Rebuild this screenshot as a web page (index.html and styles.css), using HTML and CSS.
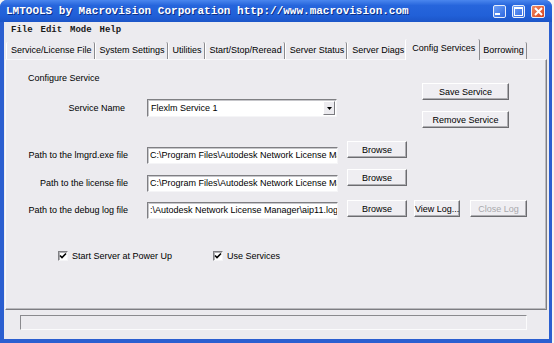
FILE: index.html
```html
<!DOCTYPE html>
<html lang="en">
<head>
    <meta charset="UTF-8">
    <title>LMTOOLS</title>
    <link rel="stylesheet" href="styles.css">
</head>
<body>
    <div class="window">
        <div class="titlebar">
            <span class="title">LMTOOLS by Macrovision Corporation http://www.macrovision.com</span>
            <div class="title-buttons">
                <span class="tbtn tbtn-min"></span>
                <span class="tbtn tbtn-max"></span>
                <span class="tbtn tbtn-close">
                    <svg width="9" height="9" viewBox="0 0 9 9"><path d="M1 1L8 8M8 1L1 8" stroke="#fff" stroke-width="2"/></svg>
                </span>
            </div>
        </div>

        <div class="client">
            <!-- menu -->
            <div class="menubar">
                <span>File</span>
                <span>Edit</span>
                <span>Mode</span>
                <span>Help</span>
            </div>

            <!-- tabs -->
            <div class="tabs">
                <span class="tab">Service/License File</span>
                <span class="tab">System Settings</span>
                <span class="tab">Utilities</span>
                <span class="tab">Start/Stop/Reread</span>
                <span class="tab">Server Status</span>
                <span class="tab">Server Diags</span>
                <span class="tab active">Config Services</span>
                <span class="tab">Borrowing</span>
            </div>

            <div class="panel">
                <div class="service-top">
                    <div class="service-left">
                        <div class="group-title">Configure Service</div>
                        <div class="service-row">
                            <span class="field-label service-label">Service Name</span>
                            <div class="select">
                                <span class="select-text">Flexlm Service 1</span>
                                <span class="select-arrow">
                                    <svg width="5" height="3" viewBox="0 0 5 3"><path d="M0 0H5L2.5 3Z" fill="#000"/></svg>
                                </span>
                            </div>
                        </div>
                    </div>
                    <div class="service-buttons">
                        <button class="btn btn-wide">Save Service</button>
                        <button class="btn btn-wide">Remove Service</button>
                    </div>
                </div>

                <div class="path-row">
                    <span class="field-label">Path to the lmgrd.exe file</span>
                    <div class="field">C:\Program Files\Autodesk Network License Ma</div>
                    <button class="btn btn-browse">Browse</button>
                </div>

                <div class="path-row second">
                    <span class="field-label">Path to the license file</span>
                    <div class="field">C:\Program Files\Autodesk Network License Ma</div>
                    <button class="btn btn-browse">Browse</button>
                </div>

                <div class="path-row log-row">
                    <span class="field-label">Path to the debug log file</span>
                    <div class="field">:\Autodesk Network License Manager\aip11.log</div>
                    <button class="btn btn-browse">Browse</button>
                    <button class="btn btn-view">View Log...</button>
                    <button class="btn btn-close" disabled>Close Log</button>
                </div>

                <div class="checks">
                    <label class="check-item">
                        <span class="checkbox">
                            <svg width="8" height="8" viewBox="0 0 8 8"><path d="M1 3.5L3 5.5L7 1.5" fill="none" stroke="#000" stroke-width="1.6"/></svg>
                        </span>
                        Start Server at Power Up
                    </label>
                    <label class="check-item">
                        <span class="checkbox">
                            <svg width="8" height="8" viewBox="0 0 8 8"><path d="M1 3.5L3 5.5L7 1.5" fill="none" stroke="#000" stroke-width="1.6"/></svg>
                        </span>
                        Use Services
                    </label>
                </div>
            </div>

            <!-- status bar -->
            <div class="statusbar">
                <div class="status-field"></div>
            </div>
        </div>
    </div>
</body>
</html>
```

FILE: styles.css
```css
:root {
    --face: #ecebef;
    --light: #ffffff;
    --frame: #2b5fd0;
}

* {
    box-sizing: border-box;
    margin: 0;
    padding: 0;
}

body {
    background: #f4f4f4;
    font-family: 'Liberation Sans', Arial, sans-serif;
    font-size: 9px;
    color: #000;
}

/* window frame */
.window {
    width: 552px;
    height: 343px;
    background: var(--frame);
    border-radius: 7px 7px 0 0;
    padding: 0 3px 4px 4px;
    display: flex;
    flex-direction: column;
}

.titlebar {
    height: 22px;
    margin: 0 -3px 0 -4px;
    padding: 0 7px 0 6px;
    border-radius: 7px 7px 0 0;
    background: linear-gradient(#4a86ee 0%, #2665dc 25%, #2160d8 70%, #1c55c8 100%);
    display: flex;
    align-items: center;
}

.title {
    font-family: 'Liberation Mono', monospace;
    font-weight: bold;
    font-size: 11px;
    color: #fff;
    text-shadow: 1px 1px 0 #0d2f86;
    white-space: nowrap;
}

.title-buttons {
    margin-left: auto;
    display: flex;
    gap: 6px;
}

.tbtn {
    width: 13px;
    height: 13px;
    border: 1px solid #e8eefb;
    border-radius: 2px;
    background: linear-gradient(135deg, #6d9ff7, #2f69e0);
    display: flex;
    align-items: center;
    justify-content: center;
}

.tbtn-min::after {
    content: '';
    width: 5px;
    height: 2px;
    background: #fff;
    margin: 6px 4px 0 0;
}

.tbtn-max::after {
    content: '';
    width: 7px;
    height: 6px;
    border: 1px solid #fff;
    border-top-width: 2px;
}

.tbtn-close {
    width: 14px;
    background: linear-gradient(135deg, #f08a64, #d8431c);
}

/* client area */
.client {
    flex: 1;
    background: var(--face);
    display: flex;
    flex-direction: column;
}

.menubar {
    height: 16px;
    padding-left: 7px;
    display: flex;
    align-items: center;
    font-family: 'Liberation Mono', monospace;
    font-weight: bold;
    font-size: 9px;
    color: #1a1a1a;
}

.menubar span {
    width: 29.5px;
}

/* tabs */
.tabs {
    height: 21px;
    padding-left: 2px;
    display: flex;
    align-items: flex-end;
}

.tab {
    height: 17px;
    line-height: 17px;
    padding: 0 2px 0 4px;
    border-left: 1px solid var(--light);
    border-right: 1px solid #8a8a8e;
    border-radius: 2px 2px 0 0;
    white-space: nowrap;
}

.tab.active {
    height: 21px;
    line-height: 19px;
    padding: 0 4px 2px 6px;
    margin: 0 -2px -1px -2px;
    background: var(--face);
    position: relative;
    z-index: 1;
}

/* panel */
.panel {
    height: 251px;
    margin: 0 2px 0 1px;
    border: 1px solid;
    border-color: #f8f8fa #7d7d82 #7d7d82 #f8f8fa;
    box-shadow: inset -1px -1px 0 #b9b9bd;
    padding: 11px 0 0 22px;
}

.service-top {
    display: flex;
    align-items: flex-start;
}

.group-title {
    line-height: 14px;
}

.service-row {
    margin-top: 14px;
    height: 18px;
    display: flex;
    align-items: center;
}

.field-label {
    width: 100px;
    text-align: right;
    white-space: nowrap;
    line-height: 17px;
}

.service-label {
    padding-right: 3px;
}

.select {
    margin-left: 19px;
    width: 190px;
    height: 18px;
    background: #fff;
    border: 1px solid;
    border-color: #7f7f83 #f5f5f7 #f5f5f7 #7f7f83;
    box-shadow: inset 1px 1px 0 #c6c6ca;
    display: flex;
    align-items: center;
    padding: 0 1px 0 3px;
}

.select-text {
    flex: 1;
}

.select-arrow {
    width: 12px;
    height: 14px;
    background: var(--face);
    border: 1px solid;
    border-color: #fff #7b7b80 #7b7b80 #fff;
    display: flex;
    align-items: center;
    justify-content: center;
}

.service-buttons {
    margin-left: 85px;
    padding-top: 12px;
    display: flex;
    flex-direction: column;
    gap: 11px;
}

/* buttons */
.btn {
    height: 17px;
    padding: 0;
    font-family: 'Liberation Sans', Arial, sans-serif;
    font-size: 9px;
    color: #000;
    white-space: nowrap;
    background: #efeef2;
    border: 1px solid;
    border-color: #fff #6c6c70 #6c6c70 #fff;
    box-shadow: inset -1px -1px 0 #aeaeb2;
}

.btn:disabled {
    color: #a9a9ad;
}

.btn-wide {
    width: 87px;
}

.btn-browse {
    width: 60px;
    margin-left: 9px;
}

.btn-view {
    width: 46px;
    margin-left: 7px;
}

.btn-close {
    width: 57px;
    margin-left: 10px;
}

/* path rows */
.path-row {
    display: flex;
    align-items: flex-start;
    margin-top: 13px;
}

.path-row.second {
    margin-top: 5px;
}

.path-row.log-row {
    margin-top: 8px;
}

.path-row .field-label {
    margin-top: 6px;
}

.field {
    margin: 6px 0 0 19px;
    width: 191px;
    height: 17px;
    line-height: 15px;
    background: #fff;
    border: 1px solid;
    border-color: #7f7f83 #f5f5f7 #f5f5f7 #7f7f83;
    box-shadow: inset 1px 1px 0 #c6c6ca;
    padding-left: 2px;
    white-space: nowrap;
    overflow: hidden;
}

.log-row .field,
.log-row .field-label {
    margin-top: 2px;
}

/* checkboxes */
.checks {
    margin-top: 30px;
    padding-left: 30px;
    height: 13px;
    display: flex;
    align-items: center;
}

.check-item {
    width: 155px;
    display: flex;
    align-items: center;
    gap: 4px;
    white-space: nowrap;
}

.check-item:last-child {
    width: auto;
}

.checkbox {
    width: 10px;
    height: 10px;
    background: #fff;
    border: 1px solid;
    border-color: #7f7f83 #f5f5f7 #f5f5f7 #7f7f83;
    box-shadow: inset 1px 1px 0 #b0b0b4;
    display: flex;
    align-items: center;
    justify-content: center;
}

/* status bar */
.statusbar {
    height: 29px;
    padding: 5px 0 0 16px;
}

.status-field {
    width: 507px;
    height: 15px;
    border: 1px solid;
    border-color: #8a8a8e #fbfbfc #fbfbfc #8a8a8e;
}
```
